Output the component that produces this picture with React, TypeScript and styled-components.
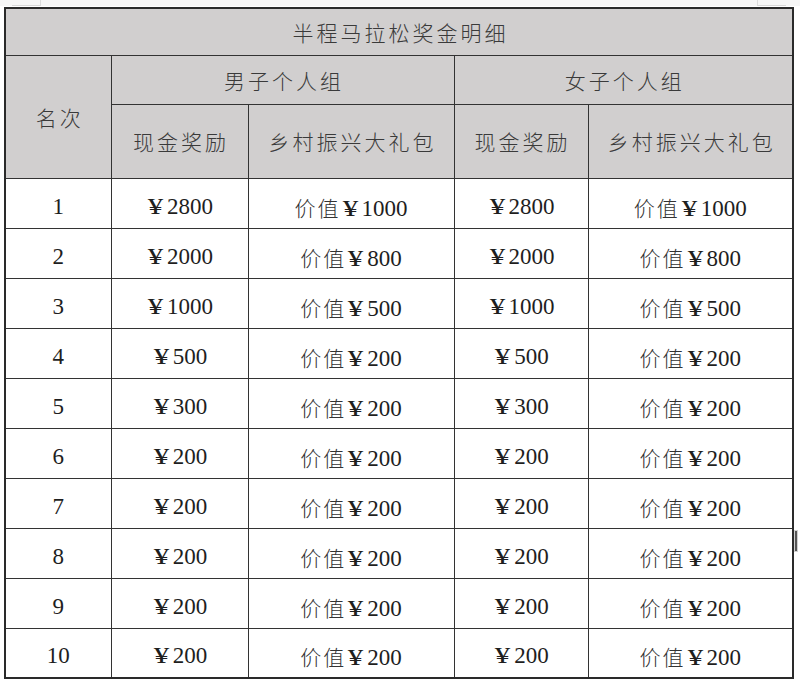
import React from "react";
import styled, { createGlobalStyle } from "styled-components";

const Global = createGlobalStyle`
  html, body { margin: 0; padding: 0; background: #ffffff; }
  body { font-family: "Liberation Serif", "Noto Sans CJK SC", serif; }
`;

const Page = styled.div`
  position: relative;
  width: 800px;
  height: 682px;
  background: #ffffff;
  overflow: hidden;
`;

const Ruler = styled.div`
  height: 6px;
  background: #f6f6f6;
  display: flex;
  justify-content: space-between;
  padding: 0 14px 0 12px;
`;

const RulerMark = styled.div<{ $side: "left" | "right" }>`
  width: 29px;
  height: 6px;
  box-sizing: border-box;
  border-bottom: 1px solid #d8d8d8;
  ${(p) => (p.$side === "left" ? "border-right: 1px solid #dcdcdc;" : "border-left: 1px solid #dcdcdc;")}
`;

const Table = styled.table`
  margin: 1px 0 0 4px;
  border-collapse: collapse;
  table-layout: fixed;
  width: 788px;
  border: 2px solid #2a2a2a;
`;

const HeadCell = styled.td<{ $h: number }>`
  height: ${(p) => p.$h}px;
  padding: 0 0 0 3px;
  background: #d1cfcf;
  border: 1px solid #333333;
  text-align: center;
  vertical-align: middle;
  font-family: "Noto Sans CJK SC", "Noto Sans CJK JP", sans-serif;
  font-weight: 300;
  font-size: 21px;
  letter-spacing: 3px;
  color: #3a3a3a;
  box-sizing: border-box;
`;

const Cell = styled.td`
  height: 50px;
  padding: 7px 0 0 0;
  border: 1px solid #333333;
  text-align: center;
  vertical-align: middle;
  font-family: "Liberation Serif", "Noto Sans CJK SC", serif;
  font-size: 23px;
  color: #1e1e1e;
  box-sizing: border-box;
  white-space: nowrap;
`;

const Cjk = styled.span`
  font-family: "Noto Sans CJK SC", "Noto Sans CJK JP", sans-serif;
  font-weight: 300;
  font-size: 21px;
  letter-spacing: 2px;
  color: #333333;
`;

const Yen = styled.span`
  display: inline-block;
  width: 19px;
  margin-right: 2px;
  text-align: center;
  font-family: "Liberation Serif", serif;
  font-size: 23px;
  transform: scaleX(1.35);
`;

const Cursor = styled.div`
  position: absolute;
  left: 794px;
  top: 530px;
  width: 2px;
  height: 20px;
  background: #555555;
  border: 1px solid #d0d0d0;
`;

type Row = { rank: number; mCash: number; mGift: number; fCash: number; fGift: number };

const rows: Row[] = [
  { rank: 1, mCash: 2800, mGift: 1000, fCash: 2800, fGift: 1000 },
  { rank: 2, mCash: 2000, mGift: 800, fCash: 2000, fGift: 800 },
  { rank: 3, mCash: 1000, mGift: 500, fCash: 1000, fGift: 500 },
  { rank: 4, mCash: 500, mGift: 200, fCash: 500, fGift: 200 },
  { rank: 5, mCash: 300, mGift: 200, fCash: 300, fGift: 200 },
  { rank: 6, mCash: 200, mGift: 200, fCash: 200, fGift: 200 },
  { rank: 7, mCash: 200, mGift: 200, fCash: 200, fGift: 200 },
  { rank: 8, mCash: 200, mGift: 200, fCash: 200, fGift: 200 },
  { rank: 9, mCash: 200, mGift: 200, fCash: 200, fGift: 200 },
  { rank: 10, mCash: 200, mGift: 200, fCash: 200, fGift: 200 },
];

const Money: React.FC<{ v: number }> = ({ v }) => (
  <>
    <Yen>¥</Yen>
    {v}
  </>
);

const Gift: React.FC<{ v: number }> = ({ v }) => (
  <>
    <Cjk>价值</Cjk>
    <Yen>¥</Yen>
    {v}
  </>
);

export default function App() {
  return (
    <Page>
      <Global />
      <Ruler>
        <RulerMark $side="left" />
        <RulerMark $side="right" />
      </Ruler>
      <Table>
        <colgroup>
          <col style={{ width: 106 }} />
          <col style={{ width: 137 }} />
          <col style={{ width: 206 }} />
          <col style={{ width: 134 }} />
          <col style={{ width: 205 }} />
        </colgroup>
        <tbody>
          <tr>
            <HeadCell $h={47} colSpan={5}>
              半程马拉松奖金明细
            </HeadCell>
          </tr>
          <tr>
            <HeadCell $h={49} rowSpan={2}>
              名次
            </HeadCell>
            <HeadCell $h={49} colSpan={2}>
              男子个人组
            </HeadCell>
            <HeadCell $h={49} colSpan={2}>
              女子个人组
            </HeadCell>
          </tr>
          <tr>
            <HeadCell $h={74}>现金奖励</HeadCell>
            <HeadCell $h={74}>乡村振兴大礼包</HeadCell>
            <HeadCell $h={74}>现金奖励</HeadCell>
            <HeadCell $h={74}>乡村振兴大礼包</HeadCell>
          </tr>
          {rows.map((r) => (
            <tr key={r.rank}>
              <Cell>{r.rank}</Cell>
              <Cell>
                <Money v={r.mCash} />
              </Cell>
              <Cell>
                <Gift v={r.mGift} />
              </Cell>
              <Cell>
                <Money v={r.fCash} />
              </Cell>
              <Cell>
                <Gift v={r.fGift} />
              </Cell>
            </tr>
          ))}
        </tbody>
      </Table>
      <Cursor />
    </Page>
  );
}
